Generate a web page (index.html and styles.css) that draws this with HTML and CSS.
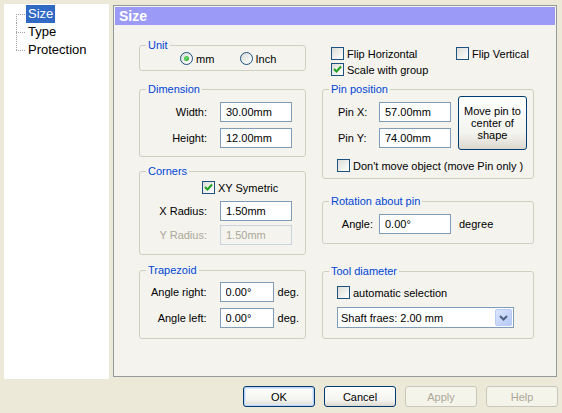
FILE: index.html
```html
<!DOCTYPE html>
<html lang="en">
<head>
    <meta charset="UTF-8">
    <title>Size</title>
    <link rel="stylesheet" href="styles.css">
</head>
<body>
<div class="window">
    <div class="tree">
        <div class="tree-row first"><span class="branch"></span><span class="node selected">Size</span></div>
        <div class="tree-row"><span class="branch"></span><span class="node">Type</span></div>
        <div class="tree-row last"><span class="branch"></span><span class="node">Protection</span></div>
    </div>

    <div class="page">
        <div class="page-title">Size</div>
        <div class="page-body">
            <div class="col-left">
                <fieldset class="group unit">
                    <legend>Unit</legend>
                    <div class="radio-row">
                        <label class="option"><span class="radio checked"></span>mm</label>
                        <label class="option"><span class="radio"></span>Inch</label>
                    </div>
                </fieldset>

                <fieldset class="group dimension">
                    <legend>Dimension</legend>
                    <div class="field"><span class="field-label">Width:</span><input class="edit" type="text" value="30.00mm"></div>
                    <div class="field"><span class="field-label">Height:</span><input class="edit" type="text" value="12.00mm"></div>
                </fieldset>

                <fieldset class="group corners">
                    <legend>Corners</legend>
                    <label class="checkbox xy">
                        <span class="check"><svg width="11" height="11" viewBox="0 0 11 11"><polyline points="2,5 4.5,7.5 9,2.5" fill="none" stroke="#21a121" stroke-width="2"/></svg></span>XY Symetric
                    </label>
                    <div class="field x-radius"><span class="field-label">X Radius:</span><input class="edit" type="text" value="1.50mm"></div>
                    <div class="field y-radius disabled"><span class="field-label">Y Radius:</span><input class="edit" type="text" value="1.50mm" disabled></div>
                </fieldset>

                <fieldset class="group trapezoid">
                    <legend>Trapezoid</legend>
                    <div class="field"><span class="field-label">Angle right:</span><input class="edit short" type="text" value="0.00°"><span class="unit-text">deg.</span></div>
                    <div class="field"><span class="field-label">Angle left:</span><input class="edit short" type="text" value="0.00°"><span class="unit-text">deg.</span></div>
                </fieldset>
            </div>

            <div class="col-right">
                <div class="flips">
                    <label class="checkbox flip-h"><span class="check"></span>Flip Horizontal</label>
                    <label class="checkbox"><span class="check"></span>Flip Vertical</label>
                </div>
                <label class="checkbox scale">
                    <span class="check"><svg width="11" height="11" viewBox="0 0 11 11"><polyline points="2,5 4.5,7.5 9,2.5" fill="none" stroke="#21a121" stroke-width="2"/></svg></span>Scale with group
                </label>

                <fieldset class="group pin">
                    <legend>Pin position</legend>
                    <div class="pin-row">
                        <div class="pin-fields">
                            <div class="field"><span class="pin-label">Pin X:</span><input class="edit" type="text" value="57.00mm"></div>
                            <div class="field"><span class="pin-label">Pin Y:</span><input class="edit" type="text" value="74.00mm"></div>
                        </div>
                        <button class="btn move-btn">Move pin to<br>center of<br>shape</button>
                    </div>
                    <label class="checkbox dont-move"><span class="check"></span>Don't move object (move Pin only )</label>
                </fieldset>

                <fieldset class="group rotation">
                    <legend>Rotation about pin</legend>
                    <div class="field"><span class="angle-label">Angle:</span><input class="edit" type="text" value="0.00°"><span class="unit-text degree">degree</span></div>
                </fieldset>

                <fieldset class="group tool">
                    <legend>Tool diameter</legend>
                    <label class="checkbox auto"><span class="check"></span>automatic selection</label>
                    <div class="combo">
                        <span class="combo-text">Shaft fraes: 2.00 mm</span>
                        <span class="combo-btn"><svg width="9" height="6" viewBox="0 0 9 6"><polyline points="1,1 4.5,4.5 8,1" fill="none" stroke="#4d6185" stroke-width="2"/></svg></span>
                    </div>
                </fieldset>
            </div>
        </div>
    </div>
</div>

<div class="buttons">
    <button class="btn default">OK</button>
    <button class="btn">Cancel</button>
    <button class="btn" disabled>Apply</button>
    <button class="btn" disabled>Help</button>
</div>
</body>
</html>
```

FILE: styles.css
```css
body {
    margin: 0;
    width: 562px;
    height: 413px;
    overflow: hidden;
    background: #ece9d8;
    font-family: "Liberation Sans", Arial, sans-serif;
    font-size: 11px;
    color: #000;
}

.window {
    display: flex;
    gap: 4px;
    padding: 4px 0 0 4px;
}

/* tree on the left */
.tree {
    width: 105px;
    height: 375px;
    background: #fff;
    padding-top: 1px;
    box-sizing: border-box;
    font-size: 13px;
}
.tree-row {
    display: flex;
    height: 18px;
    padding-left: 12px;
}
.branch {
    width: 10px;
    height: 18px;
    background:
        repeating-linear-gradient(to right, #a0a0a0 0 1px, transparent 1px 2px) 0 9px / 10px 1px no-repeat,
        repeating-linear-gradient(to bottom, #a0a0a0 0 1px, transparent 1px 2px) 0 0 / 1px 18px no-repeat;
}
.tree-row.first .branch {
    background:
        repeating-linear-gradient(to right, #a0a0a0 0 1px, transparent 1px 2px) 0 9px / 10px 1px no-repeat,
        repeating-linear-gradient(to bottom, #a0a0a0 0 1px, transparent 1px 2px) 0 9px / 1px 9px no-repeat;
}
.tree-row.last .branch {
    background:
        repeating-linear-gradient(to right, #a0a0a0 0 1px, transparent 1px 2px) 0 9px / 10px 1px no-repeat,
        repeating-linear-gradient(to bottom, #a0a0a0 0 1px, transparent 1px 2px) 0 0 / 1px 10px no-repeat;
}
.node {
    line-height: 18px;
    padding: 0 2px;
}
.node.selected {
    background: #316ac5;
    color: #fff;
}

/* property page */
.page {
    margin-top: 1px;
    width: 444px;
    height: 372px;
    border: 1px solid #919b9c;
    padding: 1px;
    box-sizing: border-box;
    background: #f4f3ee;
}
.page-title {
    height: 18px;
    line-height: 18px;
    background: #9b9bf7;
    color: #fff;
    font-size: 14px;
    font-weight: bold;
    padding-left: 4px;
}
.page-body {
    display: flex;
    align-items: flex-start;
    gap: 16px;
    padding-left: 24px;
}
.col-left {
    width: 167px;
}
.col-right {
    width: 212px;
}

.group {
    margin: 0;
    padding: 0 6px;
    border: 1px solid #d0d0bf;
    border-radius: 3px;
    box-sizing: border-box;
    min-width: 0;
}
.group legend {
    padding: 0 2px;
    line-height: 13px;
    color: #0046d5;
}

.unit { margin-top: 14px; height: 32px; }
.dimension { margin-top: 12px; height: 74px; }
.corners { margin-top: 8px; height: 90px; }
.trapezoid { margin-top: 9px; height: 75px; }

.pin { margin-top: 7px; height: 96px; }
.rotation { margin-top: 16px; height: 49px; }
.tool { margin-top: 21px; height: 74px; }

/* radios */
.radio-row {
    display: flex;
    padding-left: 34px;
}
.option {
    display: flex;
    align-items: center;
    width: 72px;
    height: 13px;
}
.radio {
    display: inline-flex;
    align-items: center;
    justify-content: center;
    width: 13px;
    height: 13px;
    margin-right: 3px;
    box-sizing: border-box;
    border: 1px solid #1c5180;
    border-radius: 50%;
    background: linear-gradient(135deg, #dcdcd7, #fff);
}
.radio.checked::after {
    content: "";
    width: 5px;
    height: 5px;
    border-radius: 50%;
    background: radial-gradient(circle at 40% 40%, #6be06b, #21a121);
}

/* checkboxes */
.checkbox {
    display: flex;
    align-items: center;
    height: 13px;
    white-space: nowrap;
}
.check {
    display: inline-flex;
    align-items: center;
    justify-content: center;
    width: 13px;
    height: 13px;
    margin-right: 3px;
    box-sizing: border-box;
    border: 1px solid #1c5180;
    background: linear-gradient(135deg, #dcdcd7, #fff);
}

.flips {
    display: flex;
    margin-top: 22px;
    padding-left: 9px;
}
.flip-h { width: 125px; }
.scale { margin: 3px 0 0 9px; }
.xy { margin: 3px 0 0 56px; }
.dont-move { margin: 9px 0 0 8px; }
.auto { margin: 8px 0 0 8px; }

/* edit rows */
.field {
    display: flex;
    align-items: center;
    height: 20px;
    margin-top: 6px;
}
.corners .x-radius { margin-top: 7px; }
.corners .y-radius { margin-top: 4px; }
.trapezoid .field:first-of-type { margin-top: 5px; }

.field-label {
    width: 61px;
    margin-right: 13px;
    text-align: right;
    white-space: nowrap;
}
.pin-label {
    width: 41px;
    padding-left: 9px;
}
.angle-label {
    width: 44px;
    margin-right: 6px;
    text-align: right;
}
.edit {
    width: 72px;
    height: 20px;
    box-sizing: border-box;
    margin: 0;
    padding: 0 0 0 5px;
    border: 1px solid #7f9db9;
    background: #fff;
    font: inherit;
    color: #000;
}
.edit.short {
    width: 54px;
}
.disabled .field-label {
    color: #aca899;
}
.edit:disabled {
    background: #f4f3ee;
    border-color: #c9d3dd;
    color: #aca899;
}
.unit-text {
    margin-left: 4px;
}
.unit-text.degree {
    margin-left: 8px;
}

.pin-row {
    display: flex;
}
.move-btn {
    width: 69px;
    height: 54px;
    margin-left: 7px;
    line-height: 13px;
}

/* combo box */
.combo {
    display: flex;
    align-items: center;
    justify-content: space-between;
    width: 177px;
    height: 21px;
    margin: 8px 0 0 8px;
    box-sizing: border-box;
    border: 1px solid #7f9db9;
    background: #fff;
    padding: 0 1px 0 3px;
}
.combo-btn {
    display: flex;
    align-items: center;
    justify-content: center;
    width: 17px;
    height: 17px;
    box-sizing: border-box;
    border: 1px solid #b9cbf3;
    border-radius: 2px;
    background: linear-gradient(135deg, #dbe6fd, #b4c8f6);
}

/* buttons */
.btn {
    box-sizing: border-box;
    border: 1px solid #003c74;
    border-radius: 3px;
    background: linear-gradient(#fff, #f3f3ef 70%, #dcd8ce);
    font: inherit;
    color: #000;
    padding: 0;
}
.buttons {
    display: flex;
    justify-content: flex-end;
    gap: 9px;
    padding: 7px 4px 0 0;
}
.buttons .btn {
    width: 72px;
    height: 21px;
}
.btn.default {
    box-shadow: inset 0 0 0 1px #bcd0f3, inset 0 0 0 2px #e0e9fa;
}
.btn:disabled {
    border-color: #c9c7ba;
    background: #f5f4ea;
    color: #aca899;
}
```
